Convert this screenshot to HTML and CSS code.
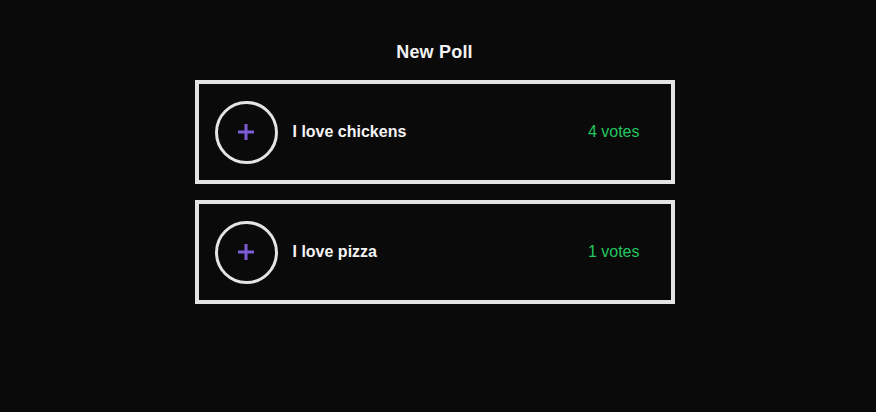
FILE: index.html
```html
<!DOCTYPE html>
<html lang="en">
<head>
<meta charset="utf-8">
<title>New Poll</title>
<link rel="stylesheet" href="styles.css">
</head>
<body>
<main class="poll">
  <h1 class="poll-title">New Poll</h1>
  <div class="option">
    <button class="vote-btn" aria-label="Vote">
      <svg width="16" height="16" viewBox="0 0 16 16"><path d="M8 0v16M0 8h16" stroke="#7b5cd6" stroke-width="3"/></svg>
    </button>
    <span class="option-text">I love chickens</span>
    <span class="option-votes">4 votes</span>
  </div>
  <div class="option">
    <button class="vote-btn" aria-label="Vote">
      <svg width="16" height="16" viewBox="0 0 16 16"><path d="M8 0v16M0 8h16" stroke="#7b5cd6" stroke-width="3"/></svg>
    </button>
    <span class="option-text">I love pizza</span>
    <span class="option-votes">1 votes</span>
  </div>
</main>
</body>
</html>
```
FILE: styles.css
```css
html, body {
  margin: 0;
  padding: 0;
  background: #0a0a0a;
  height: 100%;
}
body {
  font-family: "Liberation Sans", Arial, sans-serif;
  color: #f0f0f0;
  padding-right: 7px;
  box-sizing: border-box;
}
.poll {
  width: 480px;
  margin: 0 auto;
  padding-top: 42px;
  display: flex;
  flex-direction: column;
  gap: 16px;
}
.poll-title {
  margin: 0 0 1px;
  font-size: 18px;
  line-height: 21px;
  font-weight: 700;
  letter-spacing: 0.2px;
  text-align: center;
  color: #f2f2f2;
}
.option {
  box-sizing: border-box;
  height: 104px;
  border: 4px solid #e4e4e7;
  padding: 16px 31px 16px 16px;
  display: flex;
  align-items: center;
}
.vote-btn {
  box-sizing: border-box;
  width: 63px;
  height: 63px;
  border-radius: 50%;
  border: 3px solid #e4e4e7;
  background: transparent;
  padding: 0;
  display: flex;
  align-items: center;
  justify-content: center;
  flex: none;
}
.vote-btn svg { display: block; }
.option-text {
  margin-left: 15px;
  font-size: 16px;
  font-weight: 700;
  color: #f4f4f5;
  flex: 1;
}
.option-votes {
  font-size: 16px;
  color: #22c55e;
}
```
